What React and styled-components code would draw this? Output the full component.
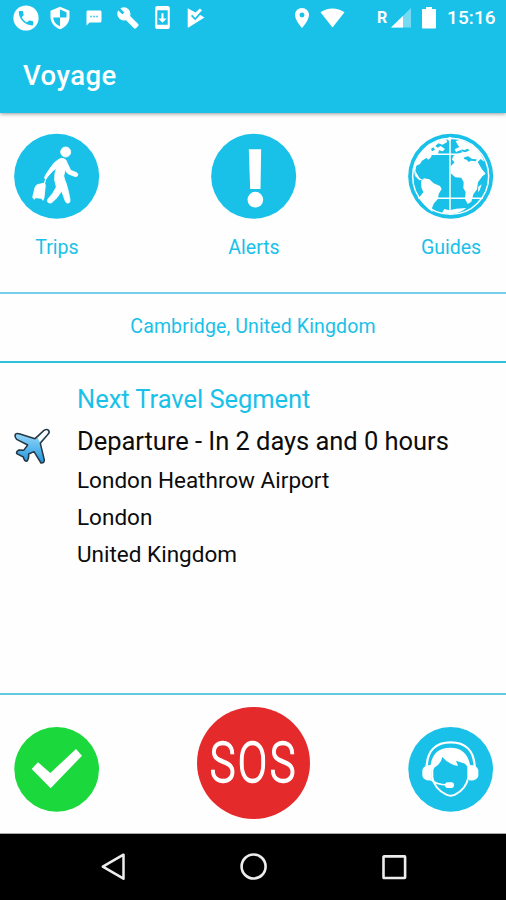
import React from "react";
import styled, { createGlobalStyle } from "styled-components";
import { MdBuild, MdLocationOn, MdSms, MdSystemUpdate } from "react-icons/md";

const CYAN = "#19c1e9";

const GlobalStyle = createGlobalStyle`
  * { box-sizing: border-box; }
  body { margin: 0; background: #fff; font-family: Roboto, "Liberation Sans", sans-serif; }
`;

const Screen = styled.div`
  width: 506px;
  height: 900px;
  display: flex;
  flex-direction: column;
  overflow: hidden;
  background: #fefefe;
`;

const Header = styled.header`
  flex: none;
  height: 113px;
  background: ${CYAN};
  color: #fff;
  box-shadow: 0 1px 4px rgba(0, 0, 0, 0.4);
`;

const StatusBar = styled.div`
  height: 35px;
  padding: 0 10px 0 9px;
  display: flex;
  justify-content: space-between;
`;

const StatusGroup = styled.div`
  display: flex;
  align-items: center;
  height: 35px;
`;

const StatusCell = styled.span`
  width: ${(p) => p.$width || 34}px;
  display: flex;
  justify-content: center;
  svg { display: block; flex: none; }
`;

const BoldCell = styled(StatusCell)`
  svg path:last-child { stroke: #fff; stroke-width: 1.2px; }
`;

const Roaming = styled.span`
  width: 11px;
  font-size: 16px;
  font-weight: 700;
  line-height: 35px;
`;

const Clock = styled.time`
  width: 49px;
  margin-left: 4px;
  font-size: 19px;
  font-weight: 500;
  line-height: 37px;
  letter-spacing: 0.1px;
  white-space: nowrap;
`;

const Title = styled.h1`
  margin: 0;
  padding: 21px 0 0 23px;
  font-size: 27.5px;
  font-weight: 500;
  line-height: 40px;
  letter-spacing: 0.45px;
`;

const Shortcuts = styled.nav`
  flex: none;
  height: 179px;
  padding: 20px 12px 0 14px;
  display: flex;
  justify-content: space-between;
`;

const Shortcut = styled.a`
  width: 86px;
  display: flex;
  flex-direction: column;
  align-items: center;
  color: ${CYAN};
  svg { display: block; }
`;

const ShortcutLabel = styled.span`
  margin-top: 14px;
  font-size: 19.5px;
  line-height: 30px;
`;

const Divider = styled.hr`
  flex: none;
  height: 2px;
  margin: 0;
  border: 0;
  background: ${(p) => p.$color};
`;

const Location = styled.div`
  flex: none;
  height: 67px;
  text-align: center;
  color: ${CYAN};
  font-size: 19.5px;
  line-height: 65px;
  letter-spacing: 0.12px;
`;

const Segment = styled.section`
  flex: 1;
  min-height: 0;
  padding-top: 16px;
  display: grid;
  grid-template-columns: 77px 1fr;
`;

const PlaneCell = styled.div`
  padding: 47px 0 0 12px;
`;

const SegmentLine = styled.div`
  color: ${(p) => (p.$accent ? CYAN : "#0c0c0c")};
  font-size: ${(p) => (p.$large ? 25.5 : 22.5)}px;
  line-height: ${(p) => (p.$large ? 41.6 : 37)}px;
  letter-spacing: ${(p) => (p.$large ? -0.04 : 0)}px;
  white-space: nowrap;
`;

const Actions = styled.footer`
  flex: none;
  height: 138px;
  padding: 11px 12px 0 14px;
  display: flex;
  justify-content: space-between;
  svg { display: block; }
`;

const RoundAction = styled.div`
  width: 86px;
  padding-top: 21px;
`;

const Sos = styled.div`
  width: 113px;
  height: 112px;
  margin-top: 1px;
  margin-right: 1px;
  border-radius: 50%;
  background: #e52a2b;
  color: #fff;
  display: flex;
  align-items: center;
  justify-content: center;
`;

const SosText = styled.span`
  font-size: 55px;
  font-weight: 300;
  line-height: 112px;
  letter-spacing: 3px;
  margin-right: -3px;
  transform: translateX(-1px) scaleX(0.79);
  -webkit-text-stroke: 1.5px #fff;
`;

const SystemNav = styled.div`
  flex: none;
  height: 67px;
  border-top: 1px solid #a8a8a8;
  background: #000;
  padding: 18px 99px 0 100px;
  display: flex;
  justify-content: space-between;
  svg { display: block; }
`;

const CallIcon = () => (
  <svg width="26" height="26" viewBox="0 0 26 26">
    <circle cx="13" cy="13" r="12.6" fill="#fff" />
    <path transform="translate(3.4 3.6) scale(.8)" fill={CYAN} d="M6.62 10.79c1.44 2.83 3.76 5.14 6.59 6.59l2.2-2.2c.27-.27.67-.36 1.02-.24 1.12.37 2.33.57 3.57.57.55 0 1 .45 1 1V20c0 .55-.45 1-1 1-9.39 0-17-7.61-17-17 0-.55.45-1 1-1h3.5c.55 0 1 .45 1 1 0 1.25.2 2.45.57 3.57.11.35.03.74-.25 1.02z" />
  </svg>
);

const ShieldIcon = () => (
  <svg width="20" height="24" viewBox="0 0 20 24">
    <path fill="#fff" d="M10 .7 19.5 4.7v6.4c0 5.5-4 10.6-9.5 12.1C4.5 21.700.5 16.600.5 11.100V4.700z" />
    <path fill={CYAN} d="M10 3.600 16.500 6.300v5.300H10zM10 11.600v8.700C6 18.900 3.600 15.600 3.200 11.600z" />
  </svg>
);

const PlayCheckIcon = () => (
  <svg width="18" height="22" viewBox="0 0 18 22">
    <path fill="#fff" d="M.7 1.200 8.500 5.600l4.400-4.100 2 1.800-2.400 4.200 5 3L1.500 20.500Q.7 20.800.7 20z" />
    <path fill="none" stroke={CYAN} strokeWidth="1.700" d="m4.600 8.400 3.600 3.700 6.200-7" />
  </svg>
);

const WifiIcon = () => (
  <svg width="25" height="20" viewBox="0 0 25 20">
    <path fill="#fff" d="M.5 4.300C7.300-.9 17.700-.9 24.500 4.300L12.500 19.500z" />
  </svg>
);

const SignalIcon = () => (
  <svg width="21" height="20" viewBox="0 0 21 20">
    <path fill="#fff" fillOpacity=".4" d="M20 0v19.500H0z" />
    <path fill="#fff" d="M12 8v11.500H0z" />
  </svg>
);

const BatteryIcon = () => (
  <svg width="14" height="22" viewBox="0 0 14 22">
    <path fill="#fff" d="M4 0h6v2h3q1 0 1 1v17.500q0 1-1 1H1q-1 0-1-1V3q0-1 1-1h3z" />
  </svg>
);

const TripsIcon = () => (
  <svg width="86" height="86" viewBox="42 39 258 258">
    <circle cx="170" cy="169" r="127.500" fill={CYAN} />
    <g fill="#fff" stroke="#fff" strokeWidth="2.500" strokeLinejoin="round">
      <circle cx="197" cy="96" r="15" />
      <path d="M175 119Q184 112 194 117Q199 120 202 130L212 151 230 158Q236 162 232 168 229 171 223 169L204 161Q200 158 196 149L191 168Q194 181 199 192 207 218 210 239 211 246 206 249 199 251 196 244L185 213Q172 235 155 248 149 251 144 247 140 243 144 237 159 222 169 201L164 180Q163 161 169 145L158 153 143 170 138 177 133 174 138 163 151 144Q162 126 175 119Z" />
      <path d="M112 194 130 190Q136 190 136 196L132 233 129 241 124 235 107 233 103 238 98 232 105 203Q107 196 112 194Z" />
    </g>
    <path d="m138 174-5 18" stroke="#fff" strokeWidth="3.500" />
  </svg>
);

const AlertsIcon = () => (
  <svg width="86" height="86" viewBox="33 39 258 258">
    <circle cx="161" cy="169" r="127.500" fill={CYAN} />
    <path d="M146.500 88h37l-2 119h-31z" fill="#fff" />
    <circle cx="166" cy="239" r="23.500" fill="#fff" />
  </svg>
);

const GuidesIcon = () => (
  <svg width="86" height="86" viewBox="36 39 258 258">
    <circle cx="164" cy="169" r="127.500" fill={CYAN} />
    <circle cx="164" cy="169" r="114" fill="none" stroke="#fff" strokeWidth="4.500" />
    <g fill="#fff">
      <path d="M53 145Q65 103 93 77L111 69 127 62 150 57 154 66 139 74 127 70 118 78 125 83 134 78 147 87 140 94 129 91 126 101 117 106 108 103 105 112 97 119 91 114 78 122 72 132 61 137 58 153 65 165 71 175 80 179 70 181 57 168Z" />
      <path d="M75 183 84 175 100 178 113 190 132 198 137 207 128 222 126 236 113 251 108 264 110 276Q82 258 70 232L82 217 76 202Z" />
      <path d="M179 63 194 59 214 68 231 77 245 91 258 109 265 125 254 117 245 126 257 146 269 161 259 169 246 187 243 208 232 223 226 245 215 252 207 237 209 217 202 204 203 187 196 173 178 172 164 160 164 139 176 127 168 119 172 107 186 101 199 97 194 90 180 96 176 88 190 81 184 73Z" />
      <path d="M138 278 145 267 160 271 181 266 211 264Q192 281 164 282ZM257 193 251 211 246 216 247 200Z" />
      <path d="m160 50 8 5-6 10-9-7zM96 101l8-5-3-14-9 10z" />
    </g>
    <g fill={CYAN}>
      <path d="m205 112 12-3 11 8 14 1-2 6-15-2-7 4-6-7-8-2zM197 88l8 3 9-5 7 5-13 6-12-3zM105 87l7-5 5 7-9 5z" />
    </g>
    <path d="M162 52v231M77 103h175M67 235h194" fill="none" stroke="#fff" strokeWidth="4.500" />
  </svg>
);

const PlaneIcon = () => (
  <svg width="40" height="40" viewBox="36 30 120 120">
    <defs>
      <linearGradient id="plane" x1="0" y1="0" x2="0" y2="1">
        <stop offset="0" stopColor="#a5dcfa" />
        <stop offset=".5" stopColor="#63bdf0" />
        <stop offset="1" stopColor="#1e92dc" />
      </linearGradient>
    </defs>
    <path fill="url(#plane)" stroke="#273743" strokeWidth="4.500" strokeLinejoin="round" d="M46 55Q50 51 60 54L105 68 132 43Q140 38 146 43 150 49 144 55L121 82 133 132Q133 142 123 141L102 107 86 114Q87 130 80 136 73 136 70 123L50 113Q48 106 57 102L71 103 83 87 50 70Q43 62 46 55Z" />
    <path fill="#fff" d="m113 66 20-20q8-5 10 0 2 3-2 8l-22 24z" />
  </svg>
);

const CheckIcon = () => (
  <svg width="86" height="86" viewBox="42 141 258 258">
    <circle cx="170" cy="268" r="127" fill="#1bd83c" />
    <path fill="#fff" d="m95 267 19-20 37 32 77-72 18 20-94 98z" />
  </svg>
);

const SupportIcon = () => (
  <svg width="86" height="86" viewBox="36 141 258 258">
    <circle cx="164" cy="268" r="127" fill={CYAN} />
    <path d="M92 262C93 211 121 187 164 187S235 211 236 262" fill="none" stroke="#fff" strokeWidth="7" />
    <path fill="#fff" d="M107 255v46Q84 304 79 288v-18Q83 255 107 255ZM219 255v46Q242 304 247 288v-18Q243 255 219 255Z" />
    <path fill="#fff" d="M103 264C105 223 127 203 163 203S220 224 223 264L215 261 207 251 180 242 186 258Q157 253 139 231 134 253 115 263L110 272Z" />
    <path fill="none" stroke="#fff" strokeWidth="6" d="M109 265v27Q115 326 151 344 164 350 177 344 211 326 217 292v-31" />
    <path fill="none" stroke="#fff" strokeWidth="5" d="M105 299q15 15 49 16" />
    <rect x="147" y="307" width="27" height="17" rx="8" fill="#fff" />
  </svg>
);

const BackIcon = () => (
  <svg width="28" height="28" viewBox="0 0 28 28">
    <path fill="none" stroke="#ededed" strokeWidth="2.500" strokeLinejoin="round" d="M23.500 2.700v24L2.800 14.700z" />
  </svg>
);

const HomeIcon = () => (
  <svg width="28" height="28" viewBox="0 0 28 28">
    <circle cx="13.600" cy="14.500" r="12" fill="none" stroke="#ededed" strokeWidth="2.600" />
  </svg>
);

const RecentsIcon = () => (
  <svg width="28" height="28" viewBox="0 0 28 28">
    <rect x="4.500" y="4.400" width="21.600" height="21.600" rx=".5" fill="none" stroke="#ededed" strokeWidth="2.600" />
  </svg>
);

const shortcuts = [
  { label: "Trips", Icon: TripsIcon },
  { label: "Alerts", Icon: AlertsIcon },
  { label: "Guides", Icon: GuidesIcon },
];

export default function App() {
  return (
    <Screen>
      <GlobalStyle />
      <Header>
        <StatusBar>
          <StatusGroup>
            <StatusCell><CallIcon /></StatusCell>
            <StatusCell><ShieldIcon /></StatusCell>
            <StatusCell><MdSms size={18} /></StatusCell>
            <BoldCell><MdBuild size={22} /></BoldCell>
            <StatusCell><MdSystemUpdate size={25} /></StatusCell>
            <StatusCell><PlayCheckIcon /></StatusCell>
          </StatusGroup>
          <StatusGroup>
            <StatusCell $width={30}><MdLocationOn size={24} /></StatusCell>
            <StatusCell $width={30}><WifiIcon /></StatusCell>
            <StatusCell $width={30} />
            <Roaming>R</Roaming>
            <StatusCell $width={27}><SignalIcon /></StatusCell>
            <StatusCell $width={28}><BatteryIcon /></StatusCell>
            <Clock>15:16</Clock>
          </StatusGroup>
        </StatusBar>
        <Title>Voyage</Title>
      </Header>
      <Shortcuts>
        {shortcuts.map(({ label, Icon }) => (
          <Shortcut key={label}>
            <Icon />
            <ShortcutLabel>{label}</ShortcutLabel>
          </Shortcut>
        ))}
      </Shortcuts>
      <Divider $color="#75cfea" />
      <Location>Cambridge, United Kingdom</Location>
      <Divider $color="#2fbfdf" />
      <Segment>
        <PlaneCell><PlaneIcon /></PlaneCell>
        <div>
          <SegmentLine $accent $large>Next Travel Segment</SegmentLine>
          <SegmentLine $large>Departure - In 2 days and 0 hours</SegmentLine>
          <SegmentLine>London Heathrow Airport</SegmentLine>
          <SegmentLine>London</SegmentLine>
          <SegmentLine>United Kingdom</SegmentLine>
        </div>
      </Segment>
      <Divider $color="#62c9dc" />
      <Actions>
        <RoundAction><CheckIcon /></RoundAction>
        <Sos><SosText>SOS</SosText></Sos>
        <RoundAction><SupportIcon /></RoundAction>
      </Actions>
      <SystemNav>
        <BackIcon />
        <HomeIcon />
        <RecentsIcon />
      </SystemNav>
    </Screen>
  );
}
